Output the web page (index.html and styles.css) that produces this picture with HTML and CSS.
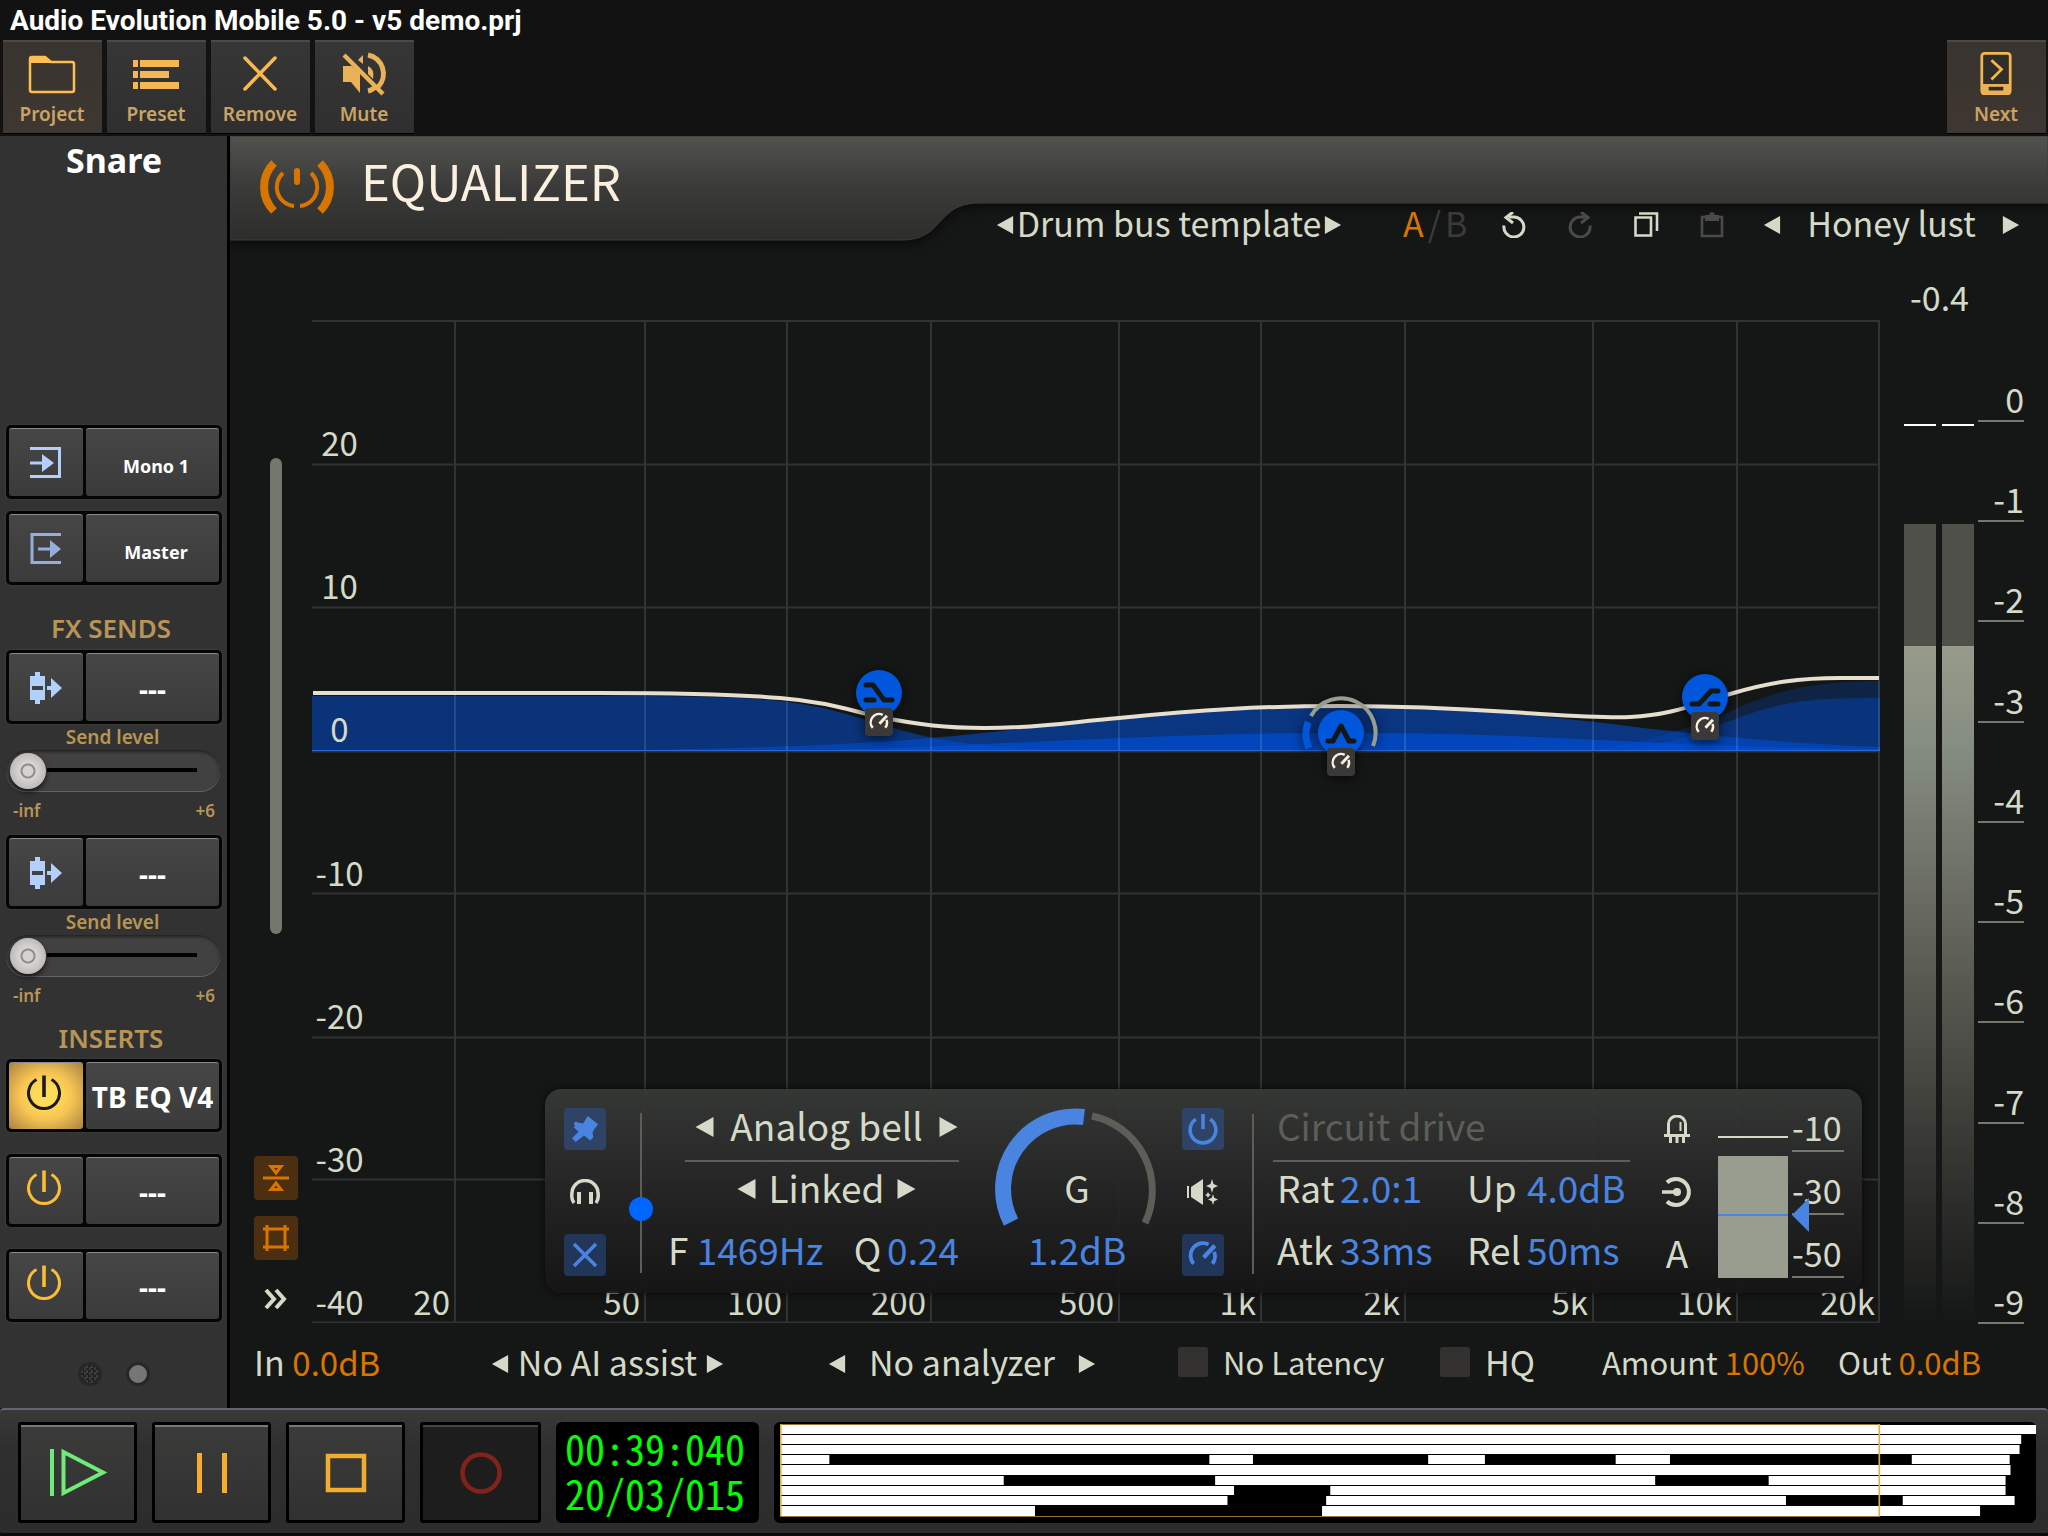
FILE: index.html
```html
<!DOCTYPE html>
<html lang="en">
<head>
<meta charset="utf-8">
<title>Audio Evolution Mobile</title>
<link rel="stylesheet" href="styles.css">
</head>
<body>
<svg class="defs" aria-hidden="true">
  <symbol id="i-power" viewBox="0 0 36 36"><path d="M10.500 5.500A15.500 15.500 0 1 0 25.500 5.500" fill="none" stroke="currentColor" stroke-width="3"/><path d="M18 1.500V23" stroke="currentColor" stroke-width="3.600"/></symbol>
  <symbol id="i-send" viewBox="0 0 32 32"><path fill="currentColor" fill-rule="evenodd" d="M5 0h5v4h5v24h-5v4H5v-4H0V4h5zM2 14v4h11v-4z"/><path fill="currentColor" d="M17 14h4V6l11 10-11 10v-8h-4z"/></symbol>
  <symbol id="i-gauge" viewBox="0 0 24 24"><g fill="none" stroke="currentColor" stroke-width="3"><path d="M4.500 19A10 10 0 0 1 16.500 3.500"/><path d="M21 9.500A10 10 0 0 1 19.500 19"/><path d="M12.500 14L21.500 4.500" stroke-width="3.500"/></g></symbol>
  <symbol id="i-left" viewBox="0 0 18 20"><path d="M0 10L18 0V20Z" fill="currentColor"/></symbol>
  <symbol id="i-right" viewBox="0 0 18 20"><path d="M18 10L0 0V20Z" fill="currentColor"/></symbol>
</svg>

<header class="topbar">
  <h1>Audio Evolution Mobile 5.0 - v5 demo.prj</h1>
  <nav class="tools">
    <button class="tool warm"><svg width="48" height="44" viewBox="0 0 48 44"><path d="M2 38V7Q2 5 4 5H17L23 10H44Q46 10 46 12V38Q46 40 44 40H4Q2 40 2 38Z" fill="none" stroke="#fdbf52" stroke-width="2.500"/><path d="M2 11V5H18L23 11Z" fill="#fdbf52"/></svg><span>Project</span></button>
    <button class="tool"><svg width="48" height="44" viewBox="0 0 48 44" fill="#f5b753"><path d="M1 8h5v7H1zM8 8h39v7H8zM1 19h5v7H1zM8 19h29v7H8zM1 30h5v7H1zM8 30h39v7H8z"/></svg><span>Preset</span></button>
    <button class="tool"><svg width="48" height="44" viewBox="0 0 48 44"><path d="M9 6L39 37M39 6L9 37" stroke="#fbb750" stroke-width="3.500" stroke-linecap="round"/></svg><span>Remove</span></button>
    <button class="tool"><svg width="48" height="44" viewBox="0 0 48 44"><path d="M3 14h9l8 7v20l-9-11H3z" fill="#e9b256"/><path d="M23 3v9l-5-4z" fill="#e9b256"/><path d="M28 3A19 19 0 0 1 38 35M28 39Q33 38 36 34" fill="none" stroke="#e9b256" stroke-width="5"/><path d="M28 14q7 3 5 13l-5-5z" fill="#e9b256"/><path d="M4 3L43 42" stroke="#e9b256" stroke-width="4.500"/></svg><span>Mute</span></button>
    <button class="tool warm next"><svg width="48" height="48" viewBox="0 0 48 48"><rect x="8.500" y="1.500" width="31" height="44" rx="3" fill="#302e2b" stroke="#f5b64c" stroke-width="3"/><path d="M8 35h32v9q0 3-3 3H11q-3 0-3-3z" fill="#e9b256"/><path d="M16 38h16v4H16z" fill="#302a24"/><path d="M19 9L30 19L19 30" fill="none" stroke="#f5b64c" stroke-width="3"/></svg><span>Next</span></button>
  </nav>
</header>

<main class="workspace">
  <aside class="channel">
    <h2>Snare</h2>
    <div class="pair io"><button aria-label="Input"><svg width="32" height="32" viewBox="0 0 32 32"><path d="M0 1.500H29.500V29.500H0" fill="none" stroke="#b3cffb" stroke-width="3"/><path d="M0 14.500h12V7l12 9-12 9v-7.500H0z" fill="#b3cffb"/></svg></button><button>Mono 1</button></div>
    <div class="pair io"><button aria-label="Output"><svg width="32" height="32" viewBox="0 0 32 32"><path d="M31 1.500H2V29.500H31" fill="none" stroke="#96aedb" stroke-width="3"/><path d="M8 14.500h12V7l11 9-11 9v-7.500H8z" fill="#96aedb"/></svg></button><button>Master</button></div>
    <h3 class="sends-title">FX SENDS</h3>
    <section class="send">
      <div class="pair"><button aria-label="Send 1"><svg class="pale" width="32" height="32"><use href="#i-send"/></svg></button><button>---</button></div>
      <label for="send1">Send level</label>
      <input class="fader" id="send1" type="range" min="0" max="100" value="0">
      <div class="ends"><span>-inf</span><span>+6</span></div>
    </section>
    <section class="send">
      <div class="pair"><button aria-label="Send 2"><svg class="pale" width="32" height="32"><use href="#i-send"/></svg></button><button>---</button></div>
      <label for="send2">Send level</label>
      <input class="fader" id="send2" type="range" min="0" max="100" value="0">
      <div class="ends"><span>-inf</span><span>+6</span></div>
    </section>
    <h3 class="inserts-title">INSERTS</h3>
    <div class="pair insert"><button class="lit" aria-label="Insert 1 power"><svg width="36" height="36"><use href="#i-power"/></svg></button><button>TB EQ V4</button></div>
    <div class="pair insert"><button aria-label="Insert 2 power"><svg width="36" height="36"><use href="#i-power"/></svg></button><button>---</button></div>
    <div class="pair insert"><button aria-label="Insert 3 power"><svg width="36" height="36"><use href="#i-power"/></svg></button><button>---</button></div>
    <div class="pages"><i></i><i class="on"></i></div>
  </aside>

  <section class="plugin">
    <header class="plug-head">
      <svg class="tab" viewBox="0 0 1818 120" preserveAspectRatio="none" aria-hidden="true">
        <defs><linearGradient id="tabfill" x1="0" y1="0" x2="0" y2="1"><stop offset="0" stop-color="#52524f"/><stop offset=".5" stop-color="#3a3a38"/><stop offset="1" stop-color="#2d2d2b"/></linearGradient></defs>
        <path class="tabshape" d="M0 0H1818V67H750C705 67 715 104 672 104H0Z" fill="url(#tabfill)" stroke="#3b3c3a"/>
      </svg>
      <svg class="brand" width="76" height="54" viewBox="-38 -27 76 54" fill="none" stroke="#d87500"><path d="M-23 -24A34 34 0 0 0 -23 24M23 -24A34 34 0 0 1 23 24" stroke-width="8"/><path d="M-14 -14A19 19 0 0 0 -3 19M14 -14A19 19 0 0 1 3 19" stroke-width="4"/><path d="M0 -16V-5" stroke-width="6" stroke-linecap="round"/></svg>
      <h2>EQUALIZER</h2>
      <div class="plug-tools">
        <div class="stepper s-template"><button aria-label="Previous template"><svg><use href="#i-left"/></svg></button><span>Drum bus template</span><button aria-label="Next template"><svg><use href="#i-right"/></svg></button></div>
        <button class="ab"><b>A</b><i>/</i><i>B</i></button>
        <div class="edits">
          <button aria-label="Undo"><svg width="26" height="26" viewBox="0 0 26 26"><path d="M3 13.500A10 10 0 1 0 13 5H8" fill="none" stroke="currentColor" stroke-width="3"/><path d="M12 0L5 5.500L12 11" fill="none" stroke="currentColor" stroke-width="3"/></svg></button>
          <button class="off" aria-label="Redo"><svg width="26" height="26" viewBox="0 0 26 26"><path d="M23 13.500A10 10 0 1 1 13 5H18" fill="none" stroke="currentColor" stroke-width="3"/><path d="M14 0L21 5.500L14 11" fill="none" stroke="currentColor" stroke-width="3"/></svg></button>
          <button aria-label="Copy"><svg width="26" height="26" viewBox="0 0 26 26"><path d="M2.500 5.500H18V23.500H2.500ZM6 1.500H24V19" fill="none" stroke="currentColor" stroke-width="2.600"/></svg></button>
          <button class="off" aria-label="Paste"><svg width="26" height="26" viewBox="0 0 26 26"><path d="M3 5H23V24H3Z" fill="none" stroke="currentColor" stroke-width="2.600"/><path d="M6 3h4q1-3 3-3t3 3h4v6H6z" fill="currentColor"/></svg></button>
        </div>
        <div class="stepper s-preset"><button aria-label="Previous preset"><svg><use href="#i-left"/></svg></button><span>Honey lust</span><button aria-label="Next preset"><svg><use href="#i-right"/></svg></button></div>
      </div>
    </header>

    <div class="plug-body">
      <div class="rail">
        <div class="zoombar"></div>
        <button class="amber" aria-label="Center"><svg width="28" height="28" viewBox="0 0 28 28" fill="none" stroke="#d87500" stroke-width="3"><path d="M1 14H27" stroke-width="3"/><path d="M9 2.500H19L14 9ZM9 25.500H19L14 19Z"/></svg></button>
        <button class="amber" aria-label="Frame"><svg width="28" height="28" viewBox="0 0 28 28" fill="none" stroke="#d87500" stroke-width="3"><path d="M5 1V27M23 1V27M1 5H27M1 23H27"/></svg></button>
        <button class="more" aria-label="More"><svg width="24" height="24" viewBox="0 0 24 24" fill="none" stroke="currentColor" stroke-width="4"><path d="M2 3L10 12L2 21M12 3L20 12L12 21"/></svg></button>
      </div>

      <div class="graph">
        <svg class="plot" viewBox="312 320 1568 1003" preserveAspectRatio="none" aria-hidden="true">
          <g fill="#0050dc">
            <path fill-opacity=".5" d="M312 696H620C690 696 740 697 780 701C840 708 870 723 920 735C960 744 1000 748 1060 751H312Z"/>
            <path fill-opacity=".54" d="M560 751C700 750 840 746 931 738C1000 732 1060 723 1119 718C1200 711 1260 708 1340 708C1480 708 1560 718 1620 725C1700 735 1780 743 1880 747V751Z"/>
            <path fill-opacity=".65" d="M780 751C900 749 1000 743 1119 738C1200 735 1260 733 1340 733C1480 733 1560 738 1620 741C1700 745 1780 748 1880 749V751Z"/>
            <path fill-opacity=".24" d="M1580 751C1640 744 1680 731 1720 716C1770 693 1800 682 1880 681V751Z"/>
            <path fill-opacity=".36" d="M1620 751C1670 744 1700 732 1730 721C1780 701 1810 698 1880 698V751Z"/>
          </g>
          <path class="zero" d="M312 750.500H1880"/>
          <path class="grid" d="M312 321H1880M312 464.500H1880M312 607.500H1880M312 751.500H1880M312 893.500H1880M312 1037.500H1880M312 1179.500H1880M312 1322.500H1880M455 320V1323M645 320V1323M787 320V1323M931 320V1323M1119 320V1323M1261 320V1323M1405 320V1323M1593 320V1323M1737 320V1323M1879 320V1323"/>
          <path class="curve" d="M313 693H600C700 693 745 695 780 698C830 702 855 712 880 717C920 725 945 728 985 728C1040 728 1070 722 1119 718C1200 710 1260 706 1341 706C1440 706 1490 711 1540 714C1590 717 1610 718 1630 717C1670 715 1690 706 1730 694C1770 682 1800 678 1840 678H1879"/>
        </svg>
        <div class="y-axis"><span></span><span>20</span><span>10</span><span>0</span><span>-10</span><span>-20</span><span>-30</span><span>-40</span></div>
        <div class="x-axis"><span>20</span><span>50</span><span>100</span><span>200</span><span>500</span><span>1k</span><span>2k</span><span>5k</span><span>10k</span><span>20k</span></div>

        <div class="node" style="left:36.160%;top:37.190%"><svg viewBox="-45 -45 90 100"><circle r="23" fill="#0057dc"/><path d="M-13 -8H-6L5 7H13M-13 7H-5" class="glyph"/><rect class="badge" x="-14" y="15" width="28" height="28" rx="4"/><svg class="cream" x="-10" y="19" width="20" height="20"><use href="#i-gauge"/></svg></svg></div>
        <div class="node" style="left:65.630%;top:41.180%"><svg viewBox="-45 -45 90 100"><path d="M-30 -17A34.500 34.500 0 0 1 32 13" fill="none" stroke="#989d8f" stroke-width="4"/><path d="M-33 -11A35 35 0 0 0 -32 15" fill="none" stroke="#0057dc" stroke-width="7"/><circle r="23" fill="#0057dc"/><path d="M-13 8H-8L0 -7L8 8H13" class="glyph"/><rect class="badge" x="-14" y="15" width="28" height="28" rx="4"/><svg class="cream" x="-10" y="19" width="20" height="20"><use href="#i-gauge"/></svg></svg></div>
        <div class="node" style="left:88.840%;top:37.590%"><svg viewBox="-45 -45 90 100"><circle r="23" fill="#0057dc"/><path d="M-13 7H-6L6 -6H13M5 7H13" class="glyph"/><rect class="badge" x="-14" y="15" width="28" height="28" rx="4"/><svg class="cream" x="-10" y="19" width="20" height="20"><use href="#i-gauge"/></svg></svg></div>

        <section class="band">
          <div class="icons">
            <button class="blue" aria-label="Pin"><svg width="28" height="28" viewBox="0 0 30 30" fill="#4984e0"><path d="M18 1L29 10L25 15L23 19L24 24L19 26L14 22L5 29L1 25L8 18L3 13L6 8L13 9Z"/><path d="M4 8L22 26" stroke="#4984e0" stroke-width="4"/></svg></button>
            <button aria-label="Listen"><svg width="30" height="26" viewBox="0 0 30 26" fill="none" stroke="currentColor"><path d="M4 24Q1 20 2 14A13 12.500 0 0 1 28 14Q29 20 26 24" stroke-width="3.500"/><path d="M9 13V25M21 13V25" stroke-width="4"/></svg></button>
            <button class="blue" aria-label="Remove band"><svg width="26" height="26" viewBox="0 0 26 26"><path d="M2 2L24 24M24 2L2 24" stroke="#4984e0" stroke-width="3.500"/></svg></button>
          </div>
          <input class="pan" type="range" min="0" max="100" value="38" aria-label="Band position">
          <div class="shape">
            <div class="stepper wide"><button aria-label="Previous shape"><svg><use href="#i-left"/></svg></button><span>Analog bell</span><button aria-label="Next shape"><svg><use href="#i-right"/></svg></button></div>
            <div class="stepper link"><button aria-label="Previous link mode"><svg><use href="#i-left"/></svg></button><span>Linked</span><button aria-label="Next link mode"><svg><use href="#i-right"/></svg></button></div>
            <div class="fq"><span>F <em>1469Hz</em></span><span>Q<em>0.24</em></span></div>
          </div>
          <div class="knob">
            <svg viewBox="-82 -82 164 120" aria-hidden="true"><path d="M-65 33A72.500 72.500 0 0 1 8 -72" fill="none" stroke="#4984e0" stroke-width="16"/><path d="M16 -73A76 76 0 0 1 69 34" fill="none" stroke="#5c5e57" stroke-width="7"/></svg>
            <span></span><span>G</span><em>1.2dB</em>
          </div>
          <div class="icons">
            <button class="blue" aria-label="Band power"><svg width="32" height="32" viewBox="0 0 36 36"><path d="M10 7A14.500 14.500 0 1 0 26 7M18 1V18" fill="none" stroke="#4984e0" stroke-width="4"/></svg></button>
            <button aria-label="Auto gain"><svg width="32" height="28" viewBox="0 0 32 28" fill="currentColor"><path d="M0 8h2v12H0zM4 9L16 1V27L4 19zM25 1l1.500 5L31 8l-4.500 2L25 15l-1.500-5L19 8l4.500-2zM26 16l1.200 3.800L31 21.500l-3.800 1.700L26 27l-1.200-3.800L21 21.500l3.800-1.700zM21 14l1 2 2 1-2 1-1 2-1-2-2-1 2-1z"/></svg></button>
            <button class="blue" aria-label="Dynamics"><svg width="32" height="30" color="#4984e0"><use href="#i-gauge"/></svg></button>
          </div>
          <div class="dynamics">
            <div class="drive">Circuit drive</div>
            <div class="params"><span>Rat</span><em>2.0:1</em><span>Up</span><em>4.0dB</em><span>Atk</span><em>33ms</em><span>Rel</span><em>50ms</em></div>
          </div>
          <div class="icons modes">
            <button aria-label="Diode"><svg width="26" height="28" viewBox="0 0 26 28" fill="none" stroke="currentColor" stroke-width="3"><path d="M4.500 19V9A8.500 8 0 0 1 21.500 9V19M0 20.500H26M6.500 20V28M13 20V28M19.500 20V28"/><path d="M16.500 7V16" stroke-width="2"/></svg></button>
            <button aria-label="Side chain"><svg width="30" height="30" viewBox="0 0 30 30" fill="none" stroke="currentColor" stroke-width="4"><path d="M5 5.500A13 13 0 1 1 5 24.500"/><path d="M0 15H14" stroke-width="3.500"/><circle cx="15" cy="15" r="4" fill="currentColor" stroke="none"/></svg></button>
            <button class="auto">A</button>
          </div>
          <div class="gr"><i></i><div></div></div>
          <div class="gr-scale"><span>-10</span><span>-30</span><span>-50</span><svg width="18" height="34" viewBox="0 0 18 34"><path d="M0 17L17 0V34Z" fill="#4984e0"/></svg></div>
        </section>
      </div>

      <div class="meters">
        <output>-0.4</output>
        <div class="bars"><div class="bar"><i></i></div><div class="bar"><i></i></div></div>
        <ol class="scale"><li>0</li><li>-1</li><li>-2</li><li>-3</li><li>-4</li><li>-5</li><li>-6</li><li>-7</li><li>-8</li><li>-9</li></ol>
      </div>
    </div>

    <footer class="plug-foot">
      <div>In <em>0.0dB</em></div>
      <div class="stepper s-ai"><button aria-label="Previous assist"><svg><use href="#i-left"/></svg></button><span>No AI assist</span><button aria-label="Next assist"><svg><use href="#i-right"/></svg></button></div>
      <div class="stepper s-an"><button aria-label="Previous analyzer"><svg><use href="#i-left"/></svg></button><span>No analyzer</span><button aria-label="Next analyzer"><svg><use href="#i-right"/></svg></button></div>
      <label class="tight"><input type="checkbox">No Latency</label>
      <label><input type="checkbox">HQ</label>
      <div class="tight">Amount <em>100%</em></div>
      <div class="tight">Out <em>0.0dB</em></div>
    </footer>
  </section>
</main>

<footer class="transport">
  <button class="key" aria-label="Play"><svg width="60" height="50" viewBox="0 0 60 50" fill="none" stroke="#70ea78" stroke-width="4"><path d="M4 1V48"/><path d="M15.500 4V45L55 24.500Z"/></svg></button>
  <button class="key" aria-label="Pause"><svg width="32" height="40" viewBox="0 0 32 40"><path d="M3.500 0V40M28.500 0V40" stroke="#f5ae2c" stroke-width="5"/></svg></button>
  <button class="key" aria-label="Stop"><svg width="42" height="40" viewBox="0 0 42 40"><rect x="3" y="3" width="36" height="34" fill="none" stroke="#f3ad2d" stroke-width="4.500"/></svg></button>
  <button class="key rec" aria-label="Record"><svg width="44" height="44" viewBox="0 0 44 44"><circle cx="22" cy="22" r="18.500" fill="none" stroke="#82231a" stroke-width="4.500"/></svg></button>
  <div class="clock"><span>00:39:040</span><span>20/03/015</span></div>
  <div class="overview">
    <svg viewBox="26 102 1527 279" preserveAspectRatio="none" aria-hidden="true">
      <path fill="#fff" d="M26 105H1553V132H26ZM26 135H1535V162H26ZM26 165H1533V192H26ZM26 195H86V222H26ZM548 195H601V222H548ZM814 195H883V222H814ZM1042 195H1108V222H1042ZM1402 195H1521V222H1402ZM26 225H1522V255H26ZM26 258H298V285H26ZM555 258H1090V285H555ZM1228 258H1516V285H1228ZM26 288H578V315H26ZM695 288H1516V315H695ZM26 318H570V345H26ZM690 318H1249V345H690ZM1391 318H1527V345H1391ZM26 348H336V378H26ZM685 348H1485V378H685Z"/>
      <rect class="window" x="27" y="103.500" width="1335.500" height="276"/>
    </svg>
  </div>
</footer>
</body>
</html>
```
FILE: styles.css
```css
:root {
  --text: #d5dac8;
  --amber: #d87500;
  --blue: #4984e0;
  --gold: #b99555;
  --ink: #151716;
}
* { box-sizing: border-box; }
body {
  margin: 0;
  min-height: 100vh;
  display: flex;
  flex-direction: column;
  background: #121212;
  color: #fff;
  font-family: "Noto Sans", sans-serif;
}
h1, h2, h3, ol { margin: 0; padding: 0; }
button {
  margin: 0; padding: 0; border: 0; background: none; color: inherit; font: inherit;
  display: flex; align-items: center; justify-content: center;
}
svg { display: block; flex: none; }
em, i { font-style: normal; }
.defs { position: absolute; width: 0; height: 0; }

/* top bar */
.topbar { padding: 0 2px 2px 3px; }
.topbar h1 { height: 40px; padding-left: 7px; font: 700 28px/42px Roboto, sans-serif; }
.tools { display: flex; gap: 5px; }
.tool {
  width: 99px; height: 94px; flex-direction: column; justify-content: flex-start; gap: 5px; padding: 10px 1px 0 0;
  background: linear-gradient(#363636, #2f2f2f);
  border-top: 2px solid #4a4a4c; border-bottom: 1px solid #000;
  color: #cba465; font-size: 19px; line-height: 26px; font-weight: 600;
}
.tool svg { height: 44px; }
.tool.warm { background: linear-gradient(#383430, #3f3731); }
.tool.next { margin-left: auto; }

/* channel strip */
.workspace { flex: 1; display: flex; }
.channel {
  flex: none; width: 230px; padding: 0 8px 0 6px; border-right: 3px solid #000; background: #323232;
  display: flex; flex-direction: column;
}
.channel h2 { height: 289px; padding-left: 3px; font-size: 34px; line-height: 48px; font-weight: 700; text-align: center; }
.channel h3 { color: var(--gold); font-size: 26px; line-height: 36px; font-weight: 600; text-align: center; }
.pair {
  display: grid; grid-template-columns: 74px 1fr; gap: 3px; width: 216px; height: 74px; padding: 3px;
  border-radius: 5px; background: #050505; box-shadow: 0 0 2px 1px #3c3c3c;
}
.pair button {
  border-radius: 3px; background: linear-gradient(#464646, #3b3b3b); border-top: 1px solid #8a8c90;
  font-size: 28px; font-weight: 700; white-space: nowrap;
}
.pair button:last-child { padding-top: 2px; color: #fff; }
.pair.io button:last-child { padding: 6px 0 0 7px; font-size: 18px; }
.pair.io { margin-bottom: 12px; }
.pale { color: #b3cffb; }
.sends-title { padding: 13px 3px 0 0; height: 53px; }
.send { height: 185px; color: var(--gold); font-weight: 600; display: flex; flex-direction: column; }
.send label { font-size: 19px; line-height: 26px; text-align: center; }
.ends { display: flex; justify-content: space-between; padding: 9px 4px 0 7px; font-size: 17px; line-height: 22px; }
.fader {
  appearance: none; width: 214px; height: 41px; margin: 0; padding: 0 4px; border-radius: 20px;
  background: linear-gradient(#000, #000) 41px 18px / 150px 4px no-repeat, #414142;
  box-shadow: inset 0 2px 3px #242220, 0 1px 0 #62646c;
}
.fader::-webkit-slider-thumb {
  appearance: none; width: 36px; height: 36px; border-radius: 50%;
  background: radial-gradient(circle, #d6d2cf 0 5px, #8e8b88 6px 7px, #d8d5d3 8px, #aaa6a4);
  box-shadow: 0 3px 5px #000a;
}
.inserts-title { height: 39px; padding-right: 3px; }
.pair.insert { height: 73px; margin: 0 0 22px; color: #fcbd34; }
.pair.insert button:first-child { padding: 0 4px 8px 0; }
.pair.insert .lit { color: #1c1a20; background: radial-gradient(#ffdc57 20%, #f7c453 50%, #a78342 100%); }
.pages { display: flex; justify-content: center; gap: 24px; padding: 18px 0 0 2px; }
.pages i { width: 24px; height: 24px; border-radius: 50%; border: 3px solid #272727; background: repeating-conic-gradient(#222 0 25%, #3d3d3d 0 50%) 0 0 / 5px 5px; }
.pages .on { background: #777675; }

/* plugin */
.plugin {
  flex: 1; min-width: 0; display: flex; flex-direction: column; background: var(--ink); color: var(--text);
  font: 400 34px/50px "Noto Sans CJK SC", sans-serif;
}
.plug-head { position: relative; height: 105px; display: flex; align-items: flex-start; padding-left: 29px; }
.tab { position: absolute; left: 0; top: 0; width: 100%; height: 120px; }
.tabshape { filter: drop-shadow(0 4px 6px #0008); }
.brand, .plug-head h2, .plug-tools { position: relative; }
.brand { margin-top: 24px; }
.plug-head h2 { margin-left: 26px; padding-top: 8px; color: #fbf0e0; font-size: 49px; line-height: 72px; font-weight: 400; }
.plug-tools {
  margin: 62px 28px 0 auto; height: 50px; width: 1024px;
  display: grid; grid-template-columns: 407fr 98fr 262fr 257fr; align-items: center; justify-items: start;
}
.stepper { display: flex; align-items: center; justify-content: space-between; white-space: nowrap; }
.stepper svg { width: 18px; height: 18px; margin-top: 4px; }
.s-template { width: 346px; }
.s-preset { width: 257px; }
.ab b { color: var(--amber); font-weight: 400; }
.ab i { color: #3a3b39; padding-left: 4px; }
.edits { display: flex; gap: 40px; }
.edits svg { margin-top: 4px; }
.off { color: #4a4b46; }

.plug-body { flex: 1; display: grid; grid-template-columns: 82px 1fr 168px; padding-top: 79px; }
.rail { display: flex; flex-direction: column; align-items: center; padding: 138px 0 12px 10px; }
.zoombar { width: 12px; height: 476px; border-radius: 6px; background: #74776b; margin-bottom: auto; }
.amber { width: 44px; height: 44px; border-radius: 4px; background: #4c2f10; margin-bottom: 16px; }
.more { height: 24px; margin: 11px 0 0; }

.graph { position: relative; }
.plot { position: absolute; inset: 0; width: 100%; height: 100%; }
.grid { fill: none; stroke: #ffffff1f; stroke-width: 2; }
.zero { fill: none; stroke: #1f5ccc; stroke-width: 1; }
.curve { fill: none; stroke: #e6decf; stroke-width: 4; }
.y-axis { position: absolute; inset: 0 auto 1px 0; width: 55px; display: flex; flex-direction: column; font-size: 33px; line-height: 42px; }
.y-axis span { flex: 1; display: flex; align-items: flex-end; justify-content: center; }
.y-axis span:first-child { flex: 0 0 0; }
.x-axis {
  position: absolute; inset: auto 0 1px 0; display: grid; font-size: 33px; line-height: 42px; text-align: right;
  grid-template-columns: 143fr 190fr 142fr 144fr 188fr 142fr 144fr 188fr 144fr 143fr;
}
.x-axis span { padding-right: 5px; }
.node { position: absolute; width: 90px; height: 100px; margin: -45px 0 0 -45px; filter: drop-shadow(0 2px 6px #000a); }
.glyph { fill: none; stroke: var(--ink); stroke-width: 5; stroke-linecap: round; stroke-linejoin: round; }
.badge { fill: #3a3937; }
.cream { color: #fbf0e0; }

/* band panel floating over the plot */
.band {
  position: absolute; left: 233px; right: 18px; bottom: 30px; height: 204px; padding: 5px 18px 13px 19px;
  display: flex; border-radius: 16px; background: linear-gradient(#373937f2, #242524f2 50%, #151515f2);
  box-shadow: 0 0 8px #000a; font-size: 37px; line-height: 62px;
}
.band > * { flex: none; }
.band em { color: var(--blue); }
.icons { display: flex; flex-direction: column; justify-content: space-between; align-items: center; width: 42px; padding: 14px 0 4px; }
.icons button { width: 42px; height: 42px; border-radius: 4px; }
.icons .blue { background: #2e4365; }
.icons .blue:last-child { background: #223659; }
.icons .auto { padding-bottom: 6px; }
.pan {
  appearance: none; writing-mode: vertical-lr; direction: rtl; width: 24px; height: 160px; margin: 19px 0 0 23px;
  background: linear-gradient(#5c5e57, #5c5e57) center / 2px 100% no-repeat;
}
.pan::-webkit-slider-thumb { appearance: none; width: 24px; height: 24px; border-radius: 50%; background: #0066ff; }
.shape { width: 274px; margin-left: 32px; }
.shape .stepper { height: 62px; }
.shape .stepper svg { width: 19px; height: 20px; }
.wide { padding: 0 1px 0 10px; position: relative; }
.wide::after, .drive::after { content: ""; position: absolute; left: 0; right: 0; bottom: -6px; height: 2px; background: #5c5e57; }
.link { padding: 0 43px 0 52px; }
.fq { display: flex; justify-content: space-between; margin-left: -17px; white-space: nowrap; }
.fq span + span em { padding-left: 6px; }
.knob { position: relative; width: 164px; margin-left: 35px; display: flex; flex-direction: column; align-items: center; }
.knob svg { position: absolute; left: 0; top: 13px; width: 164px; height: 120px; }
.knob span, .knob em { height: 62px; padding-left: 2px; }
.knob + .icons { margin-left: 24px; }
.dynamics { width: 378px; margin: 0 0 0 28px; padding-left: 21px; background: linear-gradient(#5c5e57, #5c5e57) 0 20px / 2px 160px no-repeat; }
.drive { position: relative; color: #5c5e57; padding-left: 4px; height: 62px; }
.params { display: grid; grid-template-columns: 63px 127px 60px 1fr; padding-left: 4px; }
.modes { margin-left: 26px; }
.gr { width: 70px; margin: 42px 0 0 20px; }
.gr i { display: block; height: 2px; background: var(--text); }
.gr div { height: 122px; margin-top: 18px; background: linear-gradient(var(--blue), var(--blue)) 0 58px / 100% 2px no-repeat, #989d8f; }
.gr-scale { position: relative; width: 52px; margin-left: 4px; font-size: 34px; line-height: 65px; }
.gr-scale span { display: block; height: 63px; background: linear-gradient(#74776b, #74776b) 0 56px / 100% 2px no-repeat; }
.gr-scale svg { position: absolute; left: 0; top: 104px; }

/* level meters */
.meters { display: grid; grid-template: 101px 1fr / 70px 1fr; padding: 0 24px; column-gap: 4px; }
.meters output { grid-column: 1 / 3; line-height: 50px; margin: -48px 0 0 6px; }
.bars { display: flex; gap: 6px; width: 70px; }
.bar { flex: 1; border-top: 2px solid #fff; padding-top: 98px; margin-top: 3px; }
.bar i { display: block; height: 100%; background: linear-gradient(#4f504a 0 122px, #979b8b 122px, #858d81 28%, #74776b 40%, #3c3d38 75%, #151716); }
.scale { list-style: none; display: flex; flex-direction: column; justify-content: space-between; margin: -45px 0 -1px; text-align: right; line-height: 45px; font-size: 34px; }
.scale li { height: 46px; border-bottom: 2px solid #74776b; }

.plug-foot {
  height: 85px; padding: 14px 24px 0; display: grid; align-items: start; white-space: nowrap;
  grid-template-columns: 237fr 337fr 350fr 262fr 162fr 236fr 186fr;
}
.plug-foot > * { min-width: 0; }
.plug-foot em { color: var(--amber); font-size: 33px; }
.plug-foot label { display: flex; align-items: center; gap: 15px; }
.plug-foot .tight { font-size: 31px; }
.plug-foot .tight em { font-size: 31px; }
.plug-foot input { appearance: none; width: 30px; height: 30px; margin: 0; border-radius: 2px; background: #323130; }
.s-ai { width: 233px; }
.s-an { width: 268px; }

/* transport */
.transport {
  height: 128px; padding: 12px 12px 13px 18px; display: flex; gap: 15px;
  background: linear-gradient(#3a3938, #2f2f2f 30%, #2c2c2c); border-top: 2px solid #666370; border-bottom: 3px solid #0a0a0a;
  border-radius: 4px;
}
.key {
  width: 119px; height: 101px; border: 3px solid #000; border-radius: 3px; box-shadow: inset 0 2px 0 #77787a;
  background: linear-gradient(#3b3b3a, #313131);
}
.key.rec { width: 121px; background: #1d1d1d; box-shadow: inset 0 2px 0 #444; }
.clock {
  width: 203px; height: 101px; border-radius: 6px; background: #000; color: #00ff00; padding: 4px 9px;
  font: 400 40px/45px "Noto Sans Mono CJK SC", "Noto Sans CJK SC", monospace;
}
.clock span { display: block; }
.overview { flex: 1; height: 101px; border-radius: 6px; background: #000; padding: 2px 0 6px 6px; }
.overview svg { width: 100%; height: 93px; }
.window { fill: none; stroke: #e9ac45; stroke-width: 2; }
```
